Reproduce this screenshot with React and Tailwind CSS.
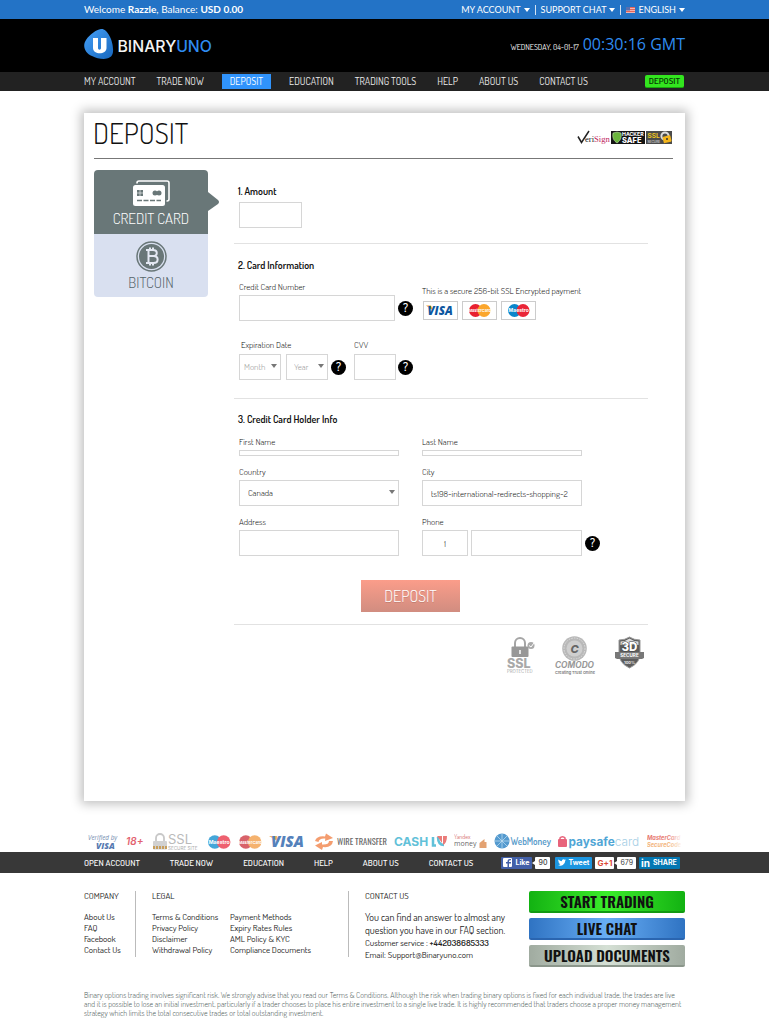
const field = 'block border border-[#d6d6d6] bg-white text-[9px] font-light text-[#111] outline-none'
const label = 'block text-[9px] leading-3 font-light text-[#111]'

function Caret() {
  return <svg className="h-1 w-[6px]" viewBox="0 0 6 4" aria-hidden="true"><path d="M0 0h6L3 4z" fill="currentColor" /></svg>
}

function Help({ topic }) {
  return (
    <button type="button" aria-label={`Help: ${topic}`} className="flex h-[15px] w-[15px] shrink-0 items-center justify-center rounded-full bg-black text-[12px] leading-none font-semibold text-white">?</button>
  )
}

function Select({ id, name, options, width, className = '' }) {
  return (
    <div className={`relative h-[26px] ${width}`}>
      <select id={id} aria-label={name} className={`${field} h-full w-full appearance-none ${className}`}>
        {options.map((o) => <option key={o}>{o}</option>)}
      </select>
      <span className="pointer-events-none absolute top-[10px] right-1 flex text-[#777]"><Caret /></span>
    </div>
  )
}

function Logo() {
  return (
    <svg className="h-8 w-[132px]" viewBox="0 0 132 32" role="img" aria-label="BinaryUno">
      <defs><linearGradient id="drop" x1="0" y1="0" x2="1" y2="1"><stop offset="0" stopColor="#45a0f8" /><stop offset="1" stopColor="#1767bd" /></linearGradient></defs>
      <path d="M17 1C23 0 30 13 29 24C28 33 16 32 8 28C1 25 -2 18 2 12C6 6 12 2 17 1Z" fill="url(#drop)" />
      <path d="M9 10h5v10c0 2.200 3 2.200 3 0v-10h5.500v10c0 7-13.500 7-13.500 0z" fill="#fff" />
      <text x="33.500" y="24" fontFamily="Inter, sans-serif" fontWeight="500" fontSize="15.800" fill="#f4f4f4">BINARY<tspan fill="#2f8cf0">UNO</tspan></text>
    </svg>
  )
}

function TopBar() {
  return (
    <div className="h-[19px] bg-[#2373c6] text-white">
      <div className="mx-auto flex h-full max-w-[601px] items-center justify-between font-['Lato',sans-serif]">
        <p className="text-[10px]">Welcome <b>Razzle</b>, Balance: <b>USD 0.00</b></p>
        <div className="flex items-center gap-[5px] text-[9px]">
          <button type="button" className="flex items-center gap-[3px]">MY ACCOUNT <Caret /></button>
          <span className="h-[10px] w-px bg-white/80" />
          <button type="button" className="flex items-center gap-[3px]">SUPPORT CHAT <Caret /></button>
          <span className="h-[10px] w-px bg-white/80" />
          <button type="button" className="flex items-center gap-[3px]">
            <svg className="h-[6px] w-[9px]" viewBox="0 0 9 6" aria-hidden="true"><rect width="9" height="6" fill="#f5b5b0" /><path d="M0 .5h9M0 2.500h9M0 4.500h9" stroke="#e0665c" /><rect width="4" height="3.500" fill="#5a6fae" /></svg>
            ENGLISH <Caret />
          </button>
        </div>
      </div>
    </div>
  )
}

const navItems = ['MY ACCOUNT', 'TRADE NOW', 'DEPOSIT', 'EDUCATION', 'TRADING TOOLS', 'HELP', 'ABOUT US', 'CONTACT US']

function Header() {
  return (
    <header>
      <TopBar />
      <div className="bg-black">
        <div className="mx-auto flex h-[53px] max-w-[601px] items-center justify-between pb-1">
          <a href="#home"><Logo /></a>
          <p className="flex items-baseline gap-1 text-[8px] text-white">
            WEDNESDAY, 04-01-17
            <span className="font-['Open_Sans',sans-serif] text-[16px] text-[#2f8cf0]">00:30:16 GMT</span>
          </p>
        </div>
      </div>
      <div className="bg-[#222]">
        <div className="mx-auto flex h-[19px] max-w-[601px] items-center justify-between">
          <nav className="flex items-center gap-[21px] text-[10px] text-[#eee]">
            {navItems.map((t) => (
              <a key={t} href="#nav" className={t === 'DEPOSIT' ? '-mx-[3px] bg-[#3093fb] px-2 leading-[15px] text-white' : 'leading-[15px]'}>{t}</a>
            ))}
          </nav>
          <a href="#deposit" className="mr-px rounded-xs border-b border-[#17a80c] bg-[#33e51f] px-1 text-[9px] leading-3 font-semibold text-[#063a04]">DEPOSIT</a>
        </div>
      </div>
    </header>
  )
}

function TrustLogos() {
  return (
    <svg className="h-[15px] w-[96px]" viewBox="0 0 96 15" role="img" aria-label="VeriSign, Hacker Safe, SSL Secure">
      <path d="M1 6.500l3.500 6L12 1" fill="none" stroke="#222" strokeWidth="1.500" />
      <text x="8" y="11.500" fontFamily="Liberation Serif, serif" fontSize="8.600" fill="#222">eri<tspan fill="#c0265c">Sign</tspan></text>
      <rect x="34" y="1" width="34" height="13" fill="#141414" />
      <path d="M36 3l4-1 4 1c1 5-1 8-4 10c-3-2-5-5-4-10z" fill="#6ab53c" stroke="#d7ebc7" strokeWidth=".5" />
      <text x="45" y="6.200" fontFamily="Inter, sans-serif" fontWeight="700" fontSize="5.200" fill="#fff">HACKER</text>
      <text x="45" y="13.200" fontFamily="Inter, sans-serif" fontWeight="800" fontSize="7.500" fill="#fff">SAFE</text>
      <rect x="69" y="1" width="26" height="13" fill="#4b4b4b" />
      <text x="70.500" y="8" fontFamily="Inter, sans-serif" fontWeight="700" fontSize="6.500" fill="#f0c71e">SSL</text>
      <text x="70.500" y="12.500" fontFamily="Inter, sans-serif" fontSize="3.200" fill="#eee">SECURE</text>
      <circle cx="88" cy="6" r="3.600" fill="none" stroke="#ddd" strokeWidth="2" />
      <rect x="86" y="6" width="8" height="6.500" rx="1" fill="#f3b51c" transform="rotate(-14 90 9)" />
      <circle cx="90" cy="9" r="1" fill="#333" />
    </svg>
  )
}

function MethodTabs() {
  return (
    <div className="h-[127px] w-[114px] shrink-0 text-[15px] font-light">
      <button type="button" className="relative flex h-16 w-full flex-col items-center rounded-t bg-[#697778] pt-[10px] leading-5 text-white">
        <svg className="h-[26px] w-[37px]" viewBox="0 0 37 26" aria-hidden="true">
          <path d="M4 3.500V3a2 2 0 0 1 2-2h28a2 2 0 0 1 2 2v16a2 2 0 0 1-2 2h-.5" fill="none" stroke="#fff" strokeWidth="1.600" />
          <rect y="5" width="32" height="21" rx="2.500" fill="#fff" />
          <rect x="4" y="10" width="6" height="6" fill="#697778" /><path d="M7 10v6M4 13h6" stroke="#fff" strokeWidth=".6" />
          <circle cx="22" cy="13" r="2.500" fill="#697778" /><circle cx="26" cy="13" r="2.500" fill="#697778" />
          <path d="M4 20.500h24" stroke="#697778" strokeWidth="1.500" strokeDasharray="5 1.500" />
        </svg>
        <span className="mt-[3px]">CREDIT CARD</span>
        <svg className="absolute top-[22px] left-full h-5 w-3" viewBox="0 0 12 20" aria-hidden="true"><path d="M0 0l10 8q2 2 0 4L0 19z" fill="#697778" /></svg>
      </button>
      <button type="button" className="flex h-[63px] w-full flex-col items-center rounded-b bg-[#d9e0f0] pt-[7px] leading-5 text-[#56646a]">
        <svg className="h-[31px] w-[31px]" viewBox="0 0 31 31" aria-hidden="true">
          <circle cx="15.500" cy="15.500" r="14.500" fill="none" stroke="#697778" strokeWidth="1.500" />
          <circle cx="15.500" cy="15.500" r="12.500" fill="#697778" />
          <path d="M10 9h7c5 0 5 6 0 6h-4 4.500c5.500 0 5.500 7 0 7H10M12.500 9v13M14 6.500V9M17 6.500V9M14 22v2.500M17 22v2.500" fill="none" stroke="#e4e9f3" strokeWidth="2" />
        </svg>
        <span className="mt-px">BITCOIN</span>
      </button>
    </div>
  )
}

function CardBrand({ children, name }) {
  return (
    <span className="flex h-[19px] w-[35px] items-center justify-center border border-[#ccc]">
      <svg className="h-[15px] w-[31px]" viewBox="0 0 31 15" role="img" aria-label={name}>{children}</svg>
    </span>
  )
}

function TwoDiscs({ left, right, text, size }) {
  return (
    <>
      <circle cx="11.500" cy="7.500" r="6.500" fill={left} /><circle cx="20" cy="7.500" r="6.500" fill={right} />
      <text x="15.700" y="9.200" textAnchor="middle" fontFamily="Inter, sans-serif" fontWeight="700" fontSize={size} fill="#fff">{text}</text>
    </>
  )
}

function Seals() {
  return (
    <div className="flex items-start gap-[18px]">
      <svg className="h-[39px] w-[30px]" viewBox="0 0 30 39" role="img" aria-label="SSL Protected">
        <path d="M9 12V7a5 5 0 0 1 10 0v5" fill="none" stroke="#a5a5a5" strokeWidth="2" />
        <rect x="5.500" y="10.500" width="17" height="10.500" rx="1" fill="#989898" /><path d="M14 14v4" stroke="#fff" strokeWidth="1.500" />
        <circle cx="25" cy="9.500" r="3.500" fill="#aaa" /><path d="M23 9.500l2 1.500 3-4" stroke="#fff" fill="none" />
        <text x="1" y="31.500" fontFamily="Inter, sans-serif" fontWeight="800" fontSize="12.500" fill="#a9a9a9">SSL</text>
        <text x="1" y="37" fontFamily="Inter, sans-serif" fontSize="4.300" fill="#a5a5a5">PROTECTED</text>
      </svg>
      <svg className="h-[39px] w-[43px]" viewBox="0 0 43 39" role="img" aria-label="Comodo, Creating Trust Online">
        <circle cx="20.500" cy="12.500" r="12.300" fill="#b9b9b9" /><circle cx="20.500" cy="12.500" r="10.500" fill="none" stroke="#dedede" strokeDasharray="1.500 1.200" /><circle cx="20.500" cy="12.500" r="8" fill="#cfcfcf" />
        <text x="20.500" y="16.500" textAnchor="middle" fontFamily="Inter, sans-serif" fontStyle="italic" fontWeight="800" fontSize="11" fill="#666">C</text>
        <text x="20.500" y="32" textAnchor="middle" fontFamily="Inter, sans-serif" fontStyle="italic" fontWeight="700" fontSize="8.300" fill="#999">COMODO</text>
        <text x="21" y="37.500" textAnchor="middle" fontFamily="Inter, sans-serif" fontWeight="600" fontSize="3.900" fill="#777">Creating Trust Online</text>
      </svg>
      <svg className="h-[33px] w-[29px]" viewBox="0 0 29 33" role="img" aria-label="3D Secure 100%">
        <path d="M4 4q6 0 10.500-3Q19 4 25 4v14q0 9-10.500 14Q4 27 4 18z" fill="#5d5d5d" stroke="#999" />
        <path d="M5.500 5.500q5 0 9-3q4 3 9 3V9h-18z" fill="#ddd" />
        <path d="M0 16h29v6l-2 1H2l-2-1z" fill="#777" />
        <text x="14.500" y="14.500" textAnchor="middle" fontFamily="Inter, sans-serif" fontWeight="800" fontSize="11.500" fill="#fff" stroke="#444" strokeWidth="1" paintOrder="stroke">3D</text>
        <text x="14.500" y="21" textAnchor="middle" fontFamily="Inter, sans-serif" fontWeight="700" fontSize="4.600" fill="#fff">SECURE</text>
        <text x="14.500" y="27.500" textAnchor="middle" fontFamily="Inter, sans-serif" fontWeight="700" fontSize="4" fill="#eee">100%</text>
      </svg>
    </div>
  )
}

function TextField({ id, title, value, height = 'h-[26px]' }) {
  return (
    <div>
      <label htmlFor={id} className={label}>{title}</label>
      <input id={id} defaultValue={value} className={`${field} mt-[2px] w-[160px] px-2 ${height}`} />
    </div>
  )
}

function DepositForm() {
  const heading = '-ml-px text-[10px] leading-3 font-semibold text-[#111]'
  const section = 'border-b border-[#e2e2e2] pl-[5px]'
  return (
    <form className="w-[414px]">
      <section className={`${section} pt-[15px] pb-[15px]`}>
        <h2 className={heading}><label htmlFor="amount">1. Amount</label></h2>
        <input id="amount" className={`${field} mt-[5px] h-[26px] w-[63px] px-2`} />
      </section>

      <section className={`${section} pt-[15px] pb-[18px]`}>
        <h2 className={heading}>2. Card Information</h2>
        <div className="mt-[10px] grid grid-cols-[183px_1fr]">
          <div>
            <label htmlFor="number" className={label}>Credit Card Number</label>
            <div className="mt-[2px] flex items-center gap-[3px]">
              <input id="number" className={`${field} h-[26px] w-[156px] px-2`} />
              <Help topic="card number" />
            </div>
          </div>
          <div className="pt-1">
            <p className={label}>This is a secure 256-bit SSL Encrypted payment</p>
            <div className="mt-1 ml-px flex gap-1">
              <CardBrand name="Visa">
                <path d="M1 2.500h5l2 5z" fill="#f0a020" />
                <text x="2.500" y="12" fontFamily="Open Sans, sans-serif" fontStyle="italic" fontWeight="800" fontSize="11.500" fill="#0d57a0">VISA</text>
              </CardBrand>
              <CardBrand name="MasterCard"><TwoDiscs left="#e8202f" right="#fba62c" text="MasterCard" size="3.900" /></CardBrand>
              <CardBrand name="Maestro"><TwoDiscs left="#0a86cb" right="#ea2537" text="Maestro" size="5" /></CardBrand>
            </div>
          </div>
        </div>
        <div className="mt-[18px] flex">
          <fieldset className="w-[115px]">
            <legend className={`${label} pl-[2px]`}>Expiration Date</legend>
            <div className="mt-[3px] flex items-center">
              <Select name="Month" options={['Month', '01', '02', '03']} width="w-[42px]" className="pl-1 text-[#999]" />
              <div className="ml-[5px]"><Select name="Year" options={['Year', '2017', '2018', '2019']} width="w-[42px]" className="pl-[7px] text-[#999]" /></div>
              <div className="ml-[3px]"><Help topic="expiration date" /></div>
            </div>
          </fieldset>
          <div>
            <label htmlFor="cvv" className={label}>CVV</label>
            <div className="mt-[3px] flex items-center gap-[2px]">
              <input id="cvv" className={`${field} h-[26px] w-[42px] px-2`} />
              <Help topic="CVV" />
            </div>
          </div>
        </div>
      </section>

      <section className={`${section} pt-[14px] pb-3`}>
        <h2 className={heading}>3. Credit Card Holder Info</h2>
        <div className="mt-[11px] grid grid-cols-[183px_1fr] gap-y-[10px]">
          <TextField id="first" title="First Name" height="h-[6px]" />
          <TextField id="last" title="Last Name" height="h-[6px]" />
          <div>
            <label htmlFor="country" className={`${label} mb-[2px]`}>Country</label>
            <Select id="country" options={['Canada', 'Germany', 'United Kingdom']} width="w-[160px]" className="pl-2" />
          </div>
          <TextField id="city" title="City" value="ts198-international-redirects-shopping-2" />
          <TextField id="address" title="Address" />
          <div>
            <label htmlFor="phone" className={label}>Phone</label>
            <div className="mt-[2px] flex items-center gap-[3px]">
              <input aria-label="Country code" defaultValue="1" className={`${field} h-[26px] w-[46px] text-center`} />
              <input id="phone" className={`${field} h-[26px] w-[111px] px-2`} />
              <Help topic="phone" />
            </div>
          </div>
        </div>
        <button type="button" className="mt-6 ml-[122px] block h-8 w-[99px] bg-linear-to-b from-[#fb9d8a] to-[#d18d80] text-[16px] font-light text-white text-shadow-2xs">DEPOSIT</button>
      </section>
      <div className="flex justify-end pt-[11px] pr-1"><Seals /></div>
    </form>
  )
}

function PaymentStrip() {
  const sans = 'Inter, sans-serif'
  return (
    <div className="mx-auto mt-[31px] mb-px flex h-[19px] max-w-[601px] items-center justify-between pr-[3px] pl-1 opacity-80">
      <svg className="h-[18px] w-8" viewBox="0 0 32 18" role="img" aria-label="Verified by Visa"><text y="6.500" fontFamily="Open Sans" fontStyle="italic" fontSize="6.300" fill="#50709c">Verified by</text><text x="8" y="15.500" fontFamily="Open Sans" fontStyle="italic" fontWeight="800" fontSize="8.500" fill="#2d5a9e">VISA</text></svg>
      <svg className="h-[18px] w-5" viewBox="0 0 20 18" role="img" aria-label="18+"><text y="12" fontFamily={sans} fontStyle="italic" fontWeight="600" fontSize="10" fill="#dc3c4d">18+</text></svg>
      <svg className="h-[18px] w-12" viewBox="0 0 48 18" role="img" aria-label="SSL Secure Site"><path d="M4 9V5a4 4 0 0 1 8 0v4" fill="none" stroke="#bbb" strokeWidth="1.800" /><rect x="1" y="8" width="14" height="8.500" rx="1" fill="#c6c6c6" /><path d="M1 14.500h14" stroke="#ba8634" strokeWidth="3" strokeDasharray="2 1" /><text x="16" y="11" fontFamily={sans} fontSize="13" fill="#aaa">SSL</text><text x="16" y="16.800" fontFamily={sans} fontSize="4.600" fill="#999">SECURE SITE</text></svg>
      <svg className="h-[18px] w-[25px]" viewBox="4 0 24 15" role="img" aria-label="Maestro"><TwoDiscs left="#1690d0" right="#eb3a4c" text="Maestro" size="5" /></svg>
      <svg className="h-[18px] w-[25px]" viewBox="4 0 24 15" role="img" aria-label="MasterCard"><TwoDiscs left="#cf3b45" right="#f3a04a" text="MasterCard" size="3.900" /></svg>
      <svg className="h-[18px] w-[39px]" viewBox="0 0 39 18" role="img" aria-label="Visa"><path d="M0 3h8l2 6z" fill="#efa23c" /><text x="2" y="14" fontFamily="Open Sans" fontStyle="italic" fontWeight="800" fontSize="15" fill="#2a62ab">VISA</text></svg>
      <svg className="h-[18px] w-[74px]" viewBox="0 0 74 18" role="img" aria-label="Wire transfer"><path d="M1 8Q3 2.500 11 3.500L12 .5l7 4.500-8 3 .3-2.500Q5 5 4.500 9zM19 8q-1 7-10 6l-1 3-7-4.500 7-3.500v2.500q7 .5 7-3.500z" fill="#f2854c" /><text x="23" y="12" fontFamily="Oswald" fontWeight="400" fontSize="8.500" fill="#444">WIRE TRANSFER</text></svg>
      <svg className="h-[18px] w-[54px]" viewBox="0 0 54 18" role="img" aria-label="CashU"><text y="12.500" fontFamily={sans} fontWeight="700" fontSize="12" fill="#3ab2d0">CASH</text><path d="M39 4v8.500h3M44 4q0 8 6 8" fill="none" stroke="#3ab2d0" strokeWidth="2.500" /><path d="M43 3l5 7V3zM49 3h4q0 7-4 9z" fill="#e65b58" /></svg>
      <svg className="h-[18px] w-[33px]" viewBox="0 0 33 18" role="img" aria-label="Yandex money"><text y="6" fontFamily="Dosis" fontSize="6" fill="#c44">Yandex</text><text y="13" fontFamily="Open Sans" fontSize="7" fill="#444">money</text><path d="M25.500 10l5-4v3h2v6h-7z" fill="#dd8c50" /></svg>
      <svg className="h-[18px] w-[58px]" viewBox="0 0 58 18" role="img" aria-label="WebMoney"><circle cx="8" cy="8" r="7.500" fill="#2a82c4" /><path d="M3 3l10 10M13 3L3 13M8 1v14M1 8h14" stroke="#b9dcf2" strokeWidth=".7" /><text x="16.500" y="11.500" fontFamily="Dosis" fontWeight="600" fontSize="9.200" fill="#2c83bd">WebMoney</text></svg>
      <svg className="h-[18px] w-[83px]" viewBox="0 0 83 18" role="img" aria-label="paysafecard"><path d="M2 7V5a3 3 0 0 1 5 0v2" fill="none" stroke="#e33d5b" strokeWidth="1.500" /><rect y="6" width="9" height="8" rx="1" fill="#e33d5b" /><text x="10.500" y="12.500" fontFamily={sans} fontWeight="700" fontSize="11.800" fill="#2590cc">paysafe<tspan fill="#8fc4e0" fontWeight="300">card</tspan></text></svg>
      <svg className="h-[18px] w-[35px]" viewBox="0 0 35 18" role="img" aria-label="MasterCard SecureCode">
        <defs>
          <linearGradient id="fadeRed"><stop offset=".6" stopColor="#e2574d" /><stop offset="1" stopColor="#e2574d" stopOpacity=".1" /></linearGradient>
          <linearGradient id="fadeOrange"><stop offset=".6" stopColor="#f0a35c" /><stop offset="1" stopColor="#f0a35c" stopOpacity=".1" /></linearGradient>
        </defs>
        <text y="6.500" fontFamily={sans} fontStyle="italic" fontWeight="700" fontSize="5.700" fill="url(#fadeRed)">MasterCard</text><text y="14" fontFamily={sans} fontStyle="italic" fontWeight="700" fontSize="5.700" fill="url(#fadeOrange)">SecureCode</text>
      </svg>
    </div>
  )
}

function Bubble({ children }) {
  return (
    <span className="relative ml-[3px] rounded-[1px] bg-white px-[3px] text-[#444]">
      <svg className="absolute top-1 -left-[3px] h-1 w-[3px]" viewBox="0 0 3 4" aria-hidden="true"><path d="M3 0v4L0 2z" fill="#fff" /></svg>
      {children}
    </span>
  )
}

function Social() {
  return (
    <div className="mr-[5px] flex items-center font-['Inter',sans-serif] text-[7px] leading-3 font-bold text-white">
      <button type="button" className="flex h-3 w-[31px] items-center gap-[3px] rounded-[1px] bg-[#4360a8] px-[2px]">
        <svg className="h-[9px] w-[9px]" viewBox="0 0 9 9" aria-hidden="true"><rect width="9" height="9" rx="1" fill="#fff" /><path d="M6 9V5.500h2V4H6V3q0-1 2-.8V1Q4.500.5 4.500 3v1H3v1.500h1.500V9z" fill="#4360a8" /></svg>Like
      </button>
      <Bubble><span className="font-medium">90</span></Bubble>
      <button type="button" className="ml-[5px] flex h-3 w-[37px] items-center gap-[2px] rounded-[1px] bg-[#1b95e0] px-[3px]">
        <svg className="h-[7px] w-2 shrink-0" viewBox="0 0 24 20" aria-hidden="true"><path d="M24 2.400a10 10 0 0 1-2.800.8A5 5 0 0 0 23.300.5a10 10 0 0 1-3.100 1.200A4.900 4.900 0 0 0 11.800 6 14 14 0 0 1 1.700.9a4.900 4.900 0 0 0 1.500 6.600A5 5 0 0 1 1 6.900a5 5 0 0 0 4 4.900 5 5 0 0 1-2.300 0 5 5 0 0 0 4.600 3.400A10 10 0 0 1 0 17.300 14 14 0 0 0 21.500 4.900 10 10 0 0 0 24 2.400z" fill="#fff" /></svg>Tweet
      </button>
      <button type="button" className="ml-[3px] h-3 w-[19px] rounded-[1px] bg-white text-[8px] text-[#dc4a38]">G+1</button>
      <Bubble><span className="font-normal">679</span></Bubble>
      <button type="button" className="ml-[3px] flex h-3 w-[41px] items-center gap-[3px] rounded-[1px] bg-[#0377b2] px-[2px]"><span className="text-[10px]">in</span> <span>SHARE</span></button>
    </div>
  )
}

function LinkList({ items }) {
  return <ul className="text-[9px] leading-[11px]">{items.map((t) => <li key={t}><a href="#info">{t}</a></li>)}</ul>
}

function Footer() {
  const cta = "flex h-[22px] items-center justify-center rounded-xs border-b-2 font-['Oswald',sans-serif] text-[15px] leading-none font-semibold text-[#111]"
  const title = 'mb-[10px] text-[9px] leading-[10px]'
  return (
    <footer>
      <div className="bg-[#383838]">
        <div className="mx-auto flex h-[21px] max-w-[601px] items-center justify-between">
          <nav className="flex gap-[30px] text-[9px] font-medium text-white">
            {['OPEN ACCOUNT', 'TRADE NOW', 'EDUCATION', 'HELP', 'ABOUT US', 'CONTACT US'].map((t) => <a key={t} href="#nav">{t}</a>)}
          </nav>
          <Social />
        </div>
      </div>
      <div className="mx-auto flex max-w-[601px] pt-[18px] text-[#222]">
        <div className="h-[66px] w-[52px] border-r border-[#bbb]">
          <h3 className={title}>COMPANY</h3>
          <LinkList items={['About Us', 'FAQ', 'Facebook', 'Contact Us']} />
        </div>
        <div className="h-[66px] w-[213px] border-r border-[#bbb] pl-4">
          <h3 className={title}>LEGAL</h3>
          <div className="flex">
            <div className="w-[78px]"><LinkList items={['Terms & Conditions', 'Privacy Policy', 'Disclaimer', 'Withdrawal Policy']} /></div>
            <LinkList items={['Payment Methods', 'Expiry Rates Rules', 'AML Policy & KYC', 'Compliance Documents']} />
          </div>
        </div>
        <div className="flex-1 pl-4 text-[9px] leading-3">
          <h3 className={title}>CONTACT US</h3>
          <p className="text-[10px] leading-[13px]">You can find an answer to almost any<br />question you have in our FAQ section.</p>
          <p>Customer service : <b className="font-semibold">+442038685333</b></p>
          <p>Email: <a href="mailto:Support@Binaryuno.com">Support@Binaryuno.com</a></p>
        </div>
        <div className="flex w-[156px] flex-col gap-[5px]">
          <a href="#trade" className={`${cta} border-[#129a12] bg-linear-to-r from-[#12b212] via-[#3aec2a] to-[#12b212]`}>START TRADING</a>
          <a href="#chat" className={`${cta} border-[#2a65b0] bg-linear-to-r from-[#2f73c2] via-[#68aef5] to-[#2f73c2]`}>LIVE CHAT</a>
          <a href="#upload" className={`${cta} border-[#8b968b] bg-linear-to-r from-[#a0aba0] via-[#d5e0d5] to-[#a0aba0]`}>UPLOAD DOCUMENTS</a>
        </div>
      </div>
      <p className="mx-auto mt-6 max-w-[601px] pb-[5px] text-[8px] leading-[9px] font-light text-[#4f5d5b]">
        Binary options trading involves significant risk. We strongly advise that you read our Terms &amp; Conditions. Although the risk when trading binary options is fixed for each individual trade, the trades are live and it is possible to lose an initial investment, particularly if a trader chooses to place his entire investment to a single live trade. It is highly recommended that traders choose a proper money management strategy which limits the total consecutive trades or total outstanding investment.
      </p>
    </footer>
  )
}

export default function App() {
  return (
    <div className="min-h-screen bg-white font-['Dosis','Liberation_Sans',sans-serif] font-normal">
      <Header />
      <main className="mx-auto mt-[22px] max-w-[601px] bg-white pr-3 pb-[126px] pl-[10px] shadow-[0_0_10px_3px_rgba(0,0,0,0.25)]">
        <div className="flex h-[46px] items-start justify-between border-b border-[#777]">
          <h1 className="-ml-px text-[29px] leading-10 font-light text-[#111]">DEPOSIT</h1>
          <div className="pt-[17px]"><TrustLogos /></div>
        </div>
        <div className="flex gap-[26px] pt-[11px]">
          <MethodTabs />
          <DepositForm />
        </div>
      </main>
      <PaymentStrip />
      <Footer />
    </div>
  )
}
